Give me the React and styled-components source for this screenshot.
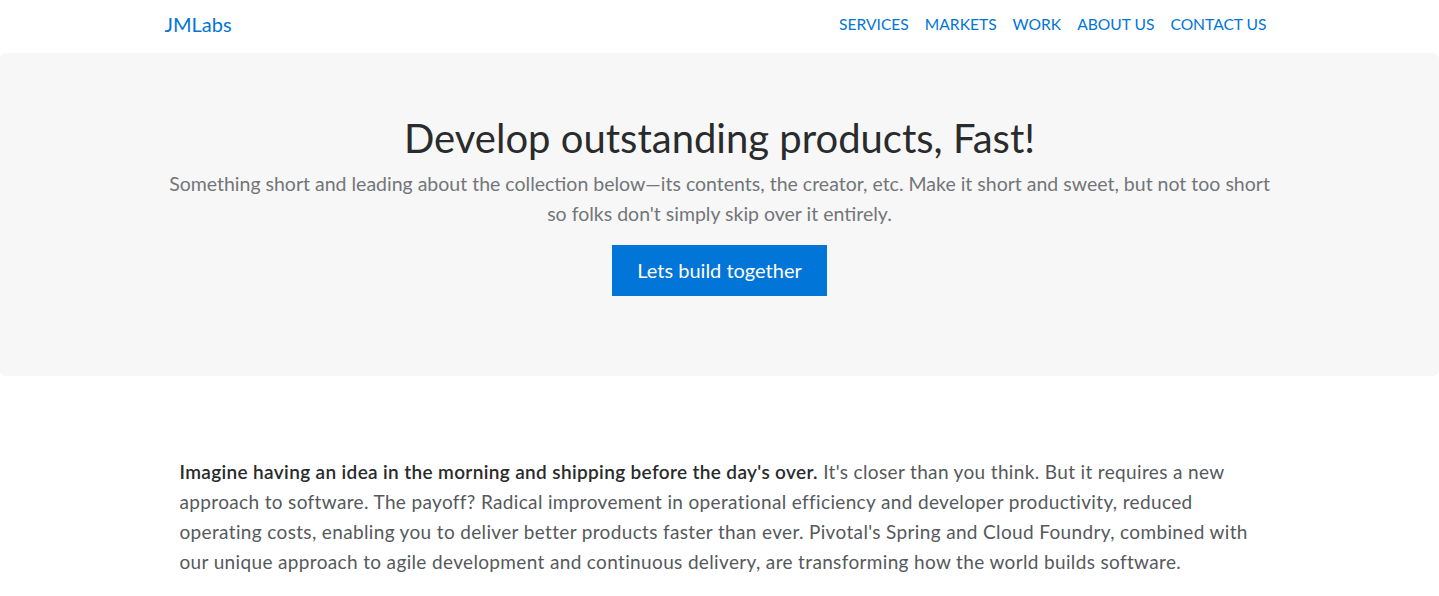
import React from 'react';
import styled, { createGlobalStyle } from 'styled-components';

const GlobalStyle = createGlobalStyle`
  * { box-sizing: border-box; }
  body {
    margin: 0;
    font-family: Lato, "Open Sans", sans-serif;
    color: #464a4c;
    background: #fff;
  }
`;

const Container = styled.div`
  max-width: 1140px;
  margin: 0 auto;
  padding: 0 15px;
`;

const Navbar = styled.nav`
  height: 53px;
  display: flex;
  align-items: center;
  justify-content: space-between;
`;

const Brand = styled.a`
  font-size: 20px;
  color: #0275d8;
  text-decoration: none;
  margin-top: -6px;
`;

const NavList = styled.ul`
  display: flex;
  list-style: none;
  margin: -5px 0 0 0;
  padding: 0;
`;

const NavLink = styled.a`
  display: block;
  padding: 0 8px;
  font-size: 15.6px;
  color: #0275d8;
  text-decoration: none;
  text-transform: uppercase;
`;

const Jumbotron = styled.section`
  background: #f7f7f7;
  border-radius: 6px;
  padding: 64px 32px 64px;
  text-align: center;
`;

const Heading = styled.h1`
  margin: 0 0 10px;
  font-size: 40px;
  font-weight: 400;
  line-height: 42px;
  color: #292b2c;
`;

const Lead = styled.p`
  margin: 0 auto 16px;
  max-width: 1110px;
  font-size: 19.5px;
  line-height: 30px;
  color: #727679;
`;

const Button = styled.a`
  display: inline-block;
  padding: 12px 25px;
  font-size: 20px;
  line-height: 27px;
  color: #fff;
  background: #0275d8;
  text-decoration: none;
  margin-bottom: 16px;
`;

const Body = styled.p`
  margin: 81px 0 0;
  padding: 0 15px;
  font-size: 19px;
  letter-spacing: 0.35px;
  line-height: 30px;
  color: #55595c;
`;

const Strong = styled.span`
  color: #292b2c;
  font-weight: 600;
`;

const links = ['Services', 'Markets', 'Work', 'About us', 'Contact us'];

export default function App() {
  return (
    <>
      <GlobalStyle />
      <Container>
        <Navbar>
          <Brand href="#">JMLabs</Brand>
          <NavList>
            {links.map((l) => (
              <li key={l}>
                <NavLink href="#">{l}</NavLink>
              </li>
            ))}
          </NavList>
        </Navbar>
      </Container>
      <Jumbotron>
        <Container>
          <Heading>Develop outstanding products, Fast!</Heading>
          <Lead>
            Something short and leading about the collection below—its contents, the creator, etc. Make it short and sweet, but not too short so folks don't simply skip over it entirely.
          </Lead>
          <Button href="#">Lets build together</Button>
        </Container>
      </Jumbotron>
      <Container>
        <Body>
          <Strong>Imagine having an idea in the morning and shipping before the day's over.</Strong>{' '}
          It's closer than you think. But it requires a new approach to software. The payoff? Radical improvement in operational efficiency and developer productivity, reduced operating costs, enabling you to deliver better products faster than ever. Pivotal's Spring and Cloud Foundry, combined with our unique approach to agile development and continuous delivery, are transforming how the world builds software.
        </Body>
      </Container>
    </>
  );
}
